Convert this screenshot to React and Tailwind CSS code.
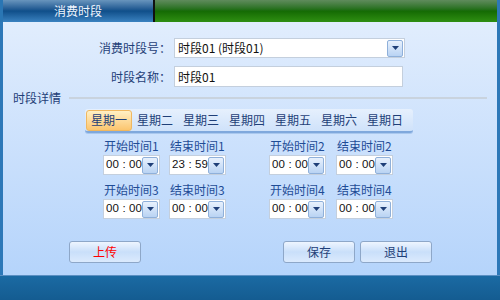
const font = { fontFamily: '"Noto Sans CJK SC", "Liberation Sans", sans-serif' };

function Arrow() {
  return (
    <div className="w-[16px] h-[17px] shrink-0 flex items-center justify-center border border-[#8fb0da] bg-gradient-to-b from-[#e8f1fd] to-[#b9d3f3] rounded-[2px]">
      <svg width="7" height="4" viewBox="0 0 7 4">
        <path d="M0 0h7L3.5 4z" fill="#1f3f78" />
      </svg>
    </div>
  );
}

function TimeBox({ h, m }) {
  return (
    <div className="w-[57px] h-[20px] flex items-center bg-white border border-[#c4cfdd] pl-[2px] pr-[1px]">
      <div
        className="flex-1 flex items-center text-[11.5px] text-[#111] leading-none"
        style={{ fontFamily: '"Liberation Sans", sans-serif' }}
      >
        <span className="w-[13px]">{h}</span>
        <span className="w-[10px] text-center">:</span>
        <span className="w-[13px]">{m}</span>
      </div>
      <Arrow />
    </div>
  );
}

function TimeField({ label, h, m }) {
  return (
    <div className="flex flex-col items-start gap-[1px]">
      <span className="text-[12px] text-[#1f4c96] leading-[16px] pl-[1px] whitespace-nowrap">{label}</span>
      <TimeBox h={h} m={m} />
    </div>
  );
}

function Btn({ children, red }) {
  return (
    <div
      className={`w-[72px] h-[22px] flex items-center justify-center rounded-[3px] border border-[#8ea7c8] bg-gradient-to-b from-[#eef5ff] via-[#c9dffa] to-[#dbeafd] text-[12px] ${
        red ? "text-[#ff0000]" : "text-[#1f3f78]"
      }`}
    >
      {children}
    </div>
  );
}

const days = ["星期一", "星期二", "星期三", "星期四", "星期五", "星期六", "星期日"];

export default function App() {
  return (
    <div className="w-[500px] h-[300px] flex flex-col overflow-hidden" style={font}>
      <div className="h-[22px] flex">
        <div className="w-[153px] flex items-center justify-center bg-gradient-to-b from-[#6895bd] via-[#0f4f8a] to-[#3a82c0] text-[12px] text-[#f0f6ff] border-l-[3px] border-[#2a76b4]">
          消费时段
        </div>
        <div className="w-[2px] bg-[#111]" />
        <div className="flex-1 bg-gradient-to-b from-[#5f8b5c] via-[#146a04] to-[#2f8f12]" />
        <div className="w-[3px] bg-[#2d78b8]" />
      </div>
      <div className="flex-1 flex flex-col border-x-[3px] border-[#2d78b8] bg-gradient-to-b from-[#e1edfd] to-[#b5d4fb]">
        <div className="flex items-center mt-[16px] h-[20px]">
          <span className="w-[168px] text-right text-[12px] text-[#1f3f78]">消费时段号：</span>
          <div className="ml-[3px] w-[231px] h-[20px] flex items-center bg-white border border-[#c4cfdd] pl-[3px] pr-[1px]">
            <span className="flex-1 text-[12px] text-[#111]">时段01 (时段01)</span>
            <Arrow />
          </div>
        </div>
        <div className="flex items-center mt-[8px] h-[21px]">
          <span className="w-[168px] text-right text-[12px] text-[#1f3f78]">时段名称：</span>
          <div className="ml-[3px] w-[229px] h-[21px] flex items-center bg-white border border-[#c4cfdd] pl-[3px]">
            <span className="text-[12px] text-[#111]">时段01</span>
          </div>
        </div>
        <div className="flex items-center mt-[1px] h-[20px]">
          <span className="ml-[10px] text-[12px] text-[#1f3f78]">时段详情</span>
          <div className="ml-[8px] w-[418px] h-[2px] bg-[#c9d3de]" />
        </div>
        <div className="ml-[82px] mt-[1px] w-[328px] h-[24px] flex items-center px-[1px] rounded-[3px] bg-gradient-to-b from-[#e6f0fd] to-[#cfe2fa] border-b-[2px] border-[#7fa8dc] shadow-[0_1px_0_#a9c8ee]">
          {days.map((d, i) => (
            <div
              key={d}
              className={`w-[46px] h-[21px] flex items-center justify-center text-[12px] text-[#1f3f78] ${
                i === 0 ? "rounded-[3px] border border-[#f0b860] bg-gradient-to-b from-[#fff0c4] to-[#fbc56e]" : ""
              }`}
            >
              {d}
            </div>
          ))}
        </div>
        <div className="flex mt-[5px]">
          <div className="ml-[100px] grid grid-cols-[57px_57px] gap-x-[9px] gap-y-[7px]">
            <TimeField label="开始时间1" h="00" m="00" />
            <TimeField label="结束时间1" h="23" m="59" />
            <TimeField label="开始时间3" h="00" m="00" />
            <TimeField label="结束时间3" h="00" m="00" />
          </div>
          <div className="ml-[43px] grid grid-cols-[58px_57px] gap-x-[9px] gap-y-[7px]">
            <TimeField label="开始时间2" h="00" m="00" />
            <TimeField label="结束时间2" h="00" m="00" />
            <TimeField label="开始时间4" h="00" m="00" />
            <TimeField label="结束时间4" h="00" m="00" />
          </div>
        </div>
        <div className="flex mt-[22px]">
          <div className="ml-[66px]">
            <Btn red>上传</Btn>
          </div>
          <div className="ml-[142px]">
            <Btn>保存</Btn>
          </div>
          <div className="ml-[5px]">
            <Btn>退出</Btn>
          </div>
        </div>
      </div>
      <div className="h-[25px] border-t border-[#5b8fc2] bg-gradient-to-b from-[#1b6aa3] to-[#145c91]" />
    </div>
  );
}
